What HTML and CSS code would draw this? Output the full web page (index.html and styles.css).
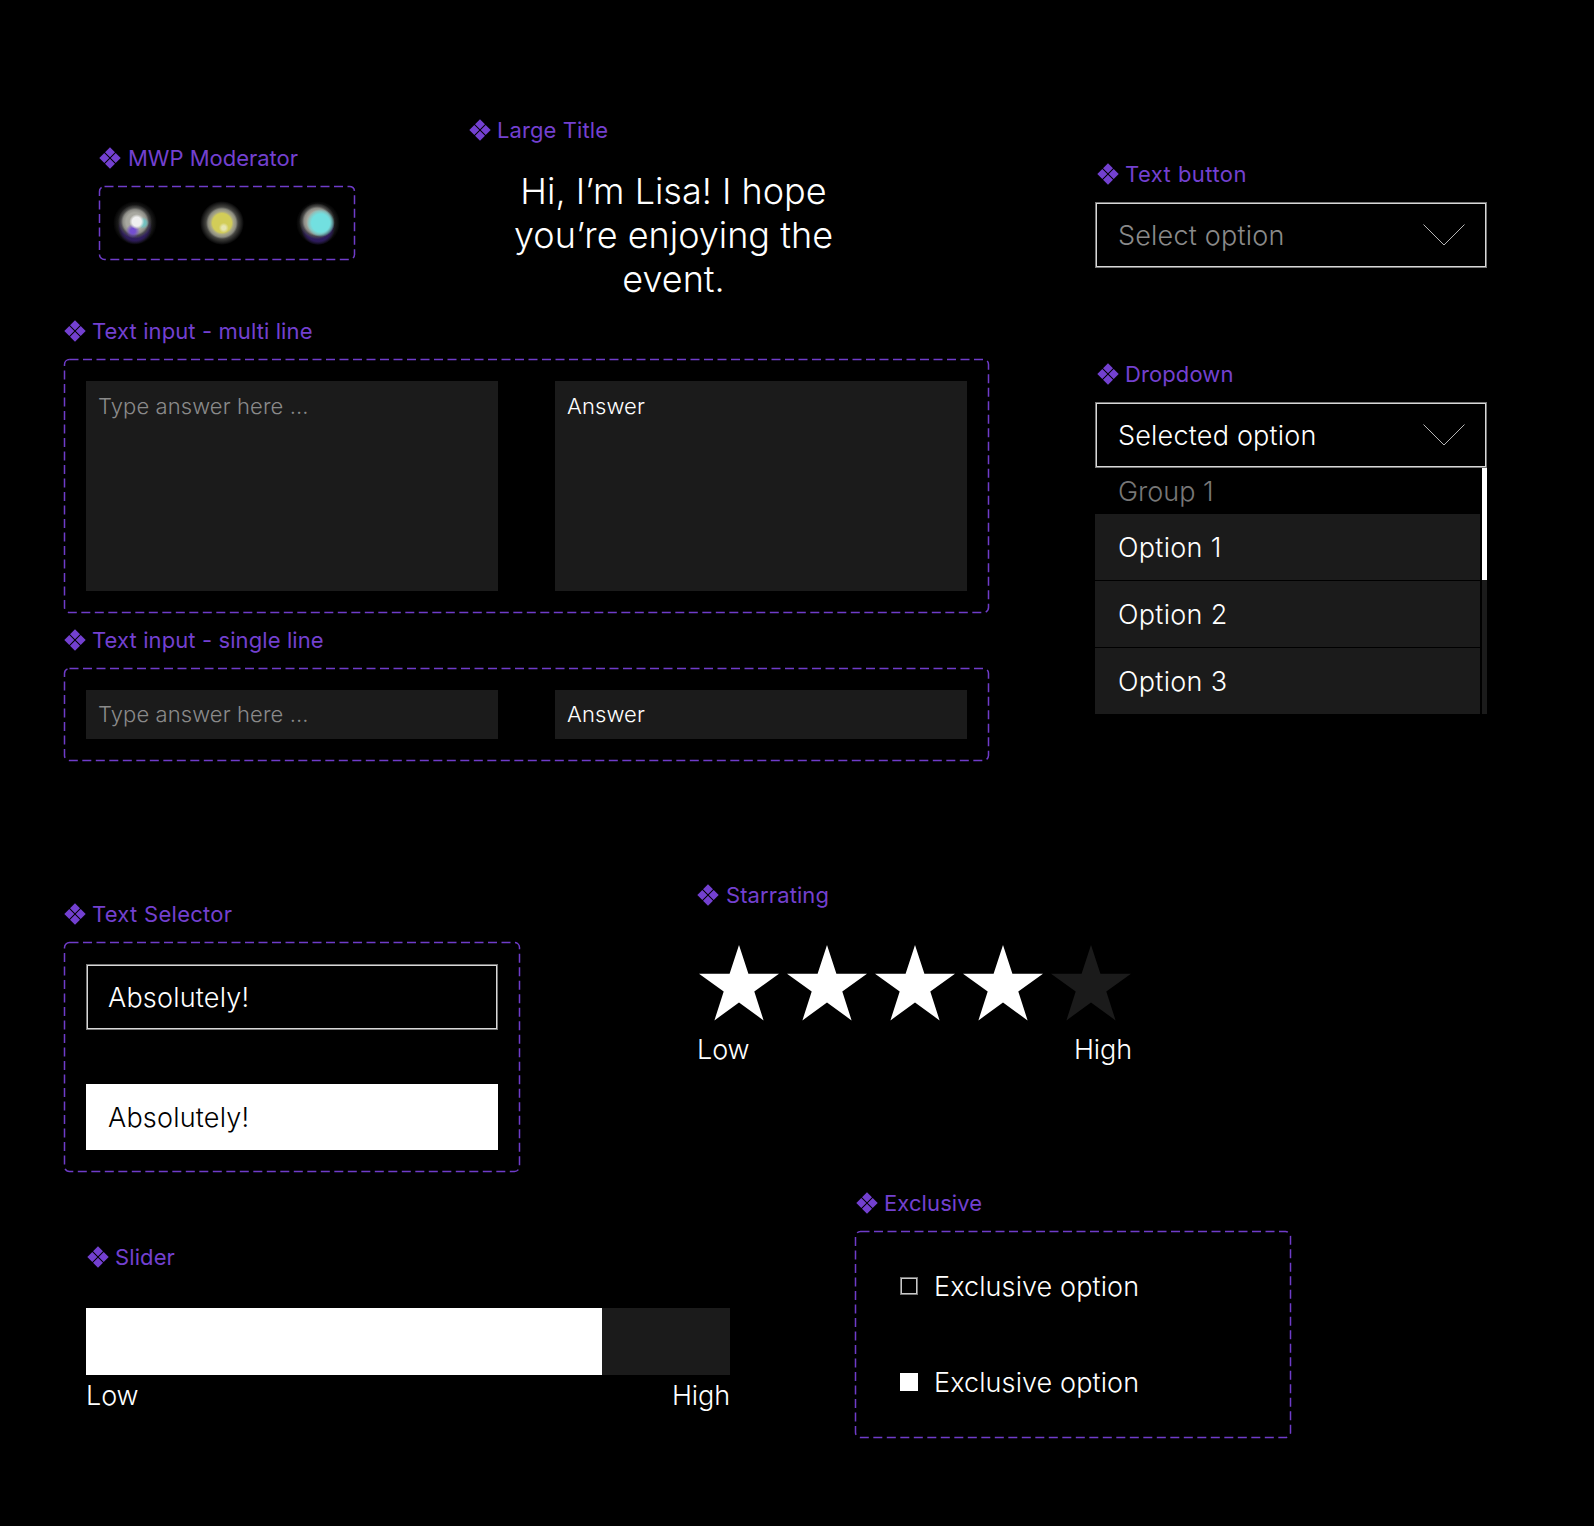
FILE: index.html
```html
<!DOCTYPE html>
<html lang="en">
<head>
<meta charset="utf-8">
<title>Components</title>
<link rel="stylesheet" href="styles.css">
</head>
<body>
<svg width="0" height="0" class="defs" aria-hidden="true">
  <symbol id="comp" viewBox="0 0 22 22">
    <path d="M11 .3l5 5-5 5-5-5zM5.3 6l5 5-5 5-5-5zM16.7 6l5 5-5 5-5-5zM11 11.7l5 5-5 5-5-5z"/>
  </symbol>
  <symbol id="chev" viewBox="0 0 42 22">
    <path d="M.5.5L21 21 41.5.5" fill="none" stroke="#b5b5b5" stroke-width="1"/>
  </symbol>
  <symbol id="star" viewBox="0 0 80 76">
    <path d="M40 0l9.4 28.8H80L55.3 46.6 64.6 75.4 40 57.6 15.4 75.4 24.7 46.6 0 28.8h30.6z"/>
  </symbol>
</svg>

<main class="canvas">
  <section class="spec moderator">
    <h2 class="label"><svg class="ico"><use href="#comp"/></svg>MWP Moderator</h2>
    <div class="frame orbs">
      <svg class="dash"><rect/></svg>
      <span class="orb orb-a"></span>
      <span class="orb orb-b"></span>
      <span class="orb orb-c"></span>
    </div>
  </section>

  <section class="spec title">
    <h2 class="label"><svg class="ico"><use href="#comp"/></svg>Large Title</h2>
    <p class="title-text">Hi, I’m Lisa! I hope you’re enjoying the event.</p>
  </section>

  <section class="spec textbtn">
    <h2 class="label"><svg class="ico"><use href="#comp"/></svg>Text button</h2>
    <div class="select muted">Select option<svg class="chev"><use href="#chev"/></svg></div>
  </section>

  <section class="spec dropdown">
    <h2 class="label"><svg class="ico"><use href="#comp"/></svg>Dropdown</h2>
    <div class="select">Selected option<svg class="chev"><use href="#chev"/></svg></div>
    <div class="menu">
      <div class="menu-list">
        <div class="group">Group 1</div>
        <div class="option">Option 1</div>
        <div class="option">Option 2</div>
        <div class="option">Option 3</div>
      </div>
      <div class="scroll"><span class="thumb"></span></div>
    </div>
  </section>

  <section class="spec multi">
    <h2 class="label"><svg class="ico"><use href="#comp"/></svg>Text input - multi line</h2>
    <div class="frame inputs">
      <svg class="dash"><rect/></svg>
      <div class="field tall placeholder">Type answer here ...</div>
      <div class="field tall">Answer</div>
    </div>
  </section>

  <section class="spec single">
    <h2 class="label"><svg class="ico"><use href="#comp"/></svg>Text input - single line</h2>
    <div class="frame inputs">
      <svg class="dash"><rect/></svg>
      <div class="field placeholder">Type answer here ...</div>
      <div class="field">Answer</div>
    </div>
  </section>

  <section class="spec selector">
    <h2 class="label"><svg class="ico"><use href="#comp"/></svg>Text Selector</h2>
    <div class="frame choices">
      <svg class="dash"><rect/></svg>
      <div class="choice">Absolutely!</div>
      <div class="choice on">Absolutely!</div>
    </div>
  </section>

  <section class="spec rating">
    <h2 class="label"><svg class="ico"><use href="#comp"/></svg>Starrating</h2>
    <div class="stars">
      <svg class="star"><use href="#star"/></svg>
      <svg class="star"><use href="#star"/></svg>
      <svg class="star"><use href="#star"/></svg>
      <svg class="star"><use href="#star"/></svg>
      <svg class="star off"><use href="#star"/></svg>
    </div>
    <div class="scale"><span>Low</span><span>High</span></div>
  </section>

  <section class="spec slider">
    <h2 class="label"><svg class="ico"><use href="#comp"/></svg>Slider</h2>
    <div class="track"><span class="fill"></span></div>
    <div class="scale"><span>Low</span><span>High</span></div>
  </section>

  <section class="spec exclusive">
    <h2 class="label"><svg class="ico"><use href="#comp"/></svg>Exclusive</h2>
    <div class="frame opts">
      <svg class="dash"><rect/></svg>
      <div class="opt"><span class="box"></span>Exclusive option</div>
      <div class="opt"><span class="box on"></span>Exclusive option</div>
    </div>
  </section>
</main>
</body>
</html>
```
FILE: styles.css
```css
* { box-sizing: border-box; }
html, body { margin: 0; background: #000; }
body { font-family: Inter, "Liberation Sans", sans-serif; color: #fff; }
.defs { position: absolute; }
.canvas { position: relative; width: 1594px; height: 1526px; background: #000; overflow: hidden; }
.spec { position: absolute; }

.label { display: flex; align-items: center; gap: 6px; margin: 0; height: 24px; font-size: 22px; font-weight: 400; line-height: 24px; letter-spacing: .1px; color: #7340d0; white-space: nowrap; }
.ico { width: 22px; height: 22px; fill: #7340d0; flex: none; }

.frame { position: relative; }
.dash { position: absolute; inset: 0; width: 100%; height: 100%; pointer-events: none; overflow: visible; }
.dash rect { x: .5px; y: .5px; width: calc(100% - 1px); height: calc(100% - 1px); rx: 5px; fill: none; stroke: #6f3cc9; stroke-width: 1.5px; stroke-dasharray: 9 4.5; }

/* moderator */
.moderator { left: 99px; top: 146px; width: 256px; }
.moderator .label { gap: 7px; letter-spacing: -.02px; }
.orbs { margin-top: 16px; width: 256px; height: 74px; display: block; }
.orb { position: absolute; top: 15px; width: 44px; height: 44px; border-radius: 50%; }
.orb-a { left: 14px; background:
  radial-gradient(circle at 54% 47%, #f0f0f0 0 4.5px, rgba(240,240,240,0) 7.5px),
  radial-gradient(circle at 68% 50%, rgba(105,200,200,.8) 0 3px, rgba(105,200,200,0) 6px),
  radial-gradient(circle at 45% 68%, rgba(112,70,215,.9) 0 2.5px, rgba(112,70,215,0) 7px),
  radial-gradient(circle at 50% 47%, #a8a8a0 0 9px, #8c8c86 12px, rgba(80,80,78,.85) 14px, rgba(70,70,70,0) 17px),
  radial-gradient(circle at 50% 60%, rgba(48,28,100,.9) 0 13px, rgba(40,24,84,0) 17px),
  radial-gradient(circle, #262626 0 14px, #151515 18px, #000 22px); }
.orb-b { left: 101px; background:
  radial-gradient(circle at 54% 61%, rgba(235,235,200,.8) 0 2px, rgba(235,235,200,0) 5px),
  radial-gradient(circle, #d2cd58 0 9.5px, #a8a786 11.5px, #8c8c80 14px, #444440 16px, #171717 20px, #000 22px); }
.orb-c { left: 197px; background:
  radial-gradient(circle at 56% 50%, #72e0e0 0 9px, rgba(114,224,224,.5) 12px, rgba(114,224,224,0) 14px),
  radial-gradient(circle at 48% 46%, #a8a89e 0 10px, #8c8c86 13px, rgba(80,80,78,.85) 15px, rgba(70,70,70,0) 18px),
  radial-gradient(circle at 50% 62%, rgba(48,28,100,.9) 0 13px, rgba(40,24,84,0) 17px),
  radial-gradient(circle, #262626 0 14px, #151515 18px, #000 22px); }

/* title */
.title { left: 469px; top: 118px; width: 410px; }
.title-text { margin: 28px 0 0; width: 409px; font-size: 36px; font-weight: 350; line-height: 43.9px; text-align: center; }

/* select */
.textbtn { left: 1095px; top: 162px; width: 392px; }
.dropdown { left: 1095px; top: 362px; width: 392px; }
.textbtn .label, .dropdown .label { padding-left: 2px; }
.textbtn .label { letter-spacing: .45px; }
.select { margin-top: 16px; height: 66px; padding: 0 22px; display: flex; align-items: center; justify-content: space-between; border: 1px solid #777; box-shadow: inset 0 0 0 1px #d8d8d8; font-size: 27px; font-weight: 300; letter-spacing: .2px; }
.select.muted { color: #8a8a8a; }
.chev { width: 42px; height: 22px; margin-right: -1px; }
.menu { display: flex; gap: 2px; }
.menu-list { flex: 1; }
.group { height: 46px; padding: 0 23px; display: flex; align-items: center; color: #777; font-size: 27px; font-weight: 300; }
.option { height: 66px; margin-bottom: 1px; padding: 0 23px; display: flex; align-items: center; background: #1b1b1b; font-size: 27px; font-weight: 300; letter-spacing: .3px; }
.option:last-child { margin-bottom: 0; }
.scroll { width: 5px; background: #1b1b1b; }
.thumb { display: block; height: 112px; background: #fff; }

/* inputs */
.multi { left: 64px; top: 319px; width: 925px; }
.single { left: 64px; top: 628px; width: 925px; }
.inputs { margin-top: 16px; padding: 22px; display: grid; grid-template-columns: 412px 412px; column-gap: 57px; }
.field { height: 49px; padding: 0 12px 1px; display: flex; align-items: center; background: #1b1b1b; font-size: 22px; font-weight: 300; letter-spacing: .1px; }
.field.tall { height: 210px; align-items: flex-start; padding-top: 12px; }
.placeholder { color: #8a8a8a; }

/* selector */
.selector { left: 64px; top: 902px; width: 456px; }
.selector .label { letter-spacing: .28px; }
.choices { margin-top: 16px; padding: 22px; display: flex; flex-direction: column; gap: 54px; }
.choice { height: 66px; padding: 0 21px; display: flex; align-items: center; border: 1px solid #777; box-shadow: inset 0 0 0 1px #d8d8d8; font-size: 27px; font-weight: 300; letter-spacing: .2px; }
.choice.on { background: #fff; color: #000; border-color: #fff; box-shadow: none; }

/* rating */
.rating { left: 697px; top: 883px; width: 435px; }
.rating .label { gap: 7px; }
.stars { margin-top: 38px; padding-left: 2px; display: flex; gap: 8px; }
.star { width: 80px; height: 76px; fill: #fff; flex: none; }
.star.off { fill: #1b1b1b; }
.scale { display: flex; justify-content: space-between; font-size: 27px; font-weight: 300; line-height: 34px; letter-spacing: -.1px; }
.rating .scale { margin-top: 12px; }

/* slider */
.slider { left: 86px; top: 1245px; width: 644px; }
.slider .label { padding-left: 1px; }
.track { margin-top: 39px; height: 67px; background: #1b1b1b; }
.fill { display: block; width: 516px; height: 100%; background: #fff; }
.slider .scale { margin-top: 4px; }

/* exclusive */
.exclusive { left: 855px; top: 1191px; width: 436px; }
.exclusive .label { padding-left: 1px; }
.opts { margin-top: 16px; height: 207px; padding: 38px 45px; display: flex; flex-direction: column; gap: 62px; }
.opt { display: flex; align-items: center; gap: 16px; height: 34px; font-size: 27px; font-weight: 300; letter-spacing: .1px; }
.box { width: 18px; height: 18px; border: 1px solid #777; box-shadow: inset 0 0 0 1px #c8c8c8; flex: none; }
.box.on { background: #fff; border-color: #fff; box-shadow: none; }
```
